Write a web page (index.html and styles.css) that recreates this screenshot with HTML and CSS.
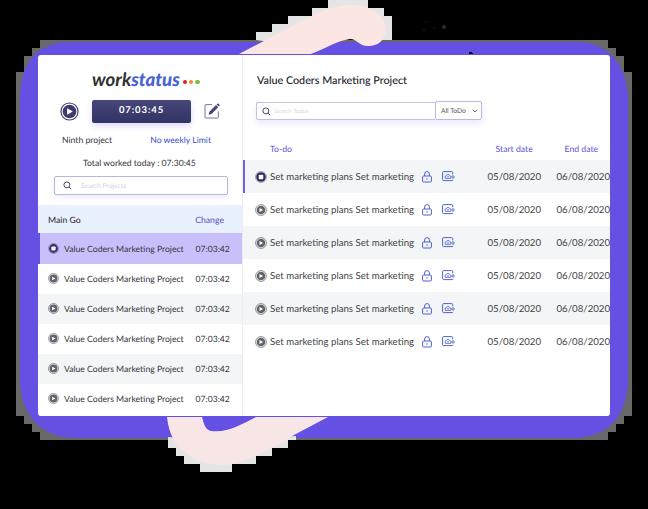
FILE: index.html
```
<!DOCTYPE html>
<html lang="en">
<head>
<meta charset="utf-8">
<title>Workstatus</title>
<link rel="stylesheet" href="styles.css">
</head>
<body>
<svg class="backdrop" width="648" height="509" viewBox="0 0 648 509">
  <path fill="#686868" d="M40 40H608V48H616V56H624V72H632V416H624V424H616V432H608V440H40V432H32V424H24V416H16V72H24V56H32V48H40Z"/>
  <path fill="#6550e4" d="M70 42H580C608 43 628 66 628 100V378C628 414 610 438 572 438H76C40 438 20 414 20 378V100C20 64 36 42 70 42Z"/>
  <path fill="#e6e5e5" d="M256 40V32H272V24H288V16H312V8H328V0H368V8H384V16H392V40H380L350 30L270 42Z"/>
  <path fill="#fce6e3" d="M239 54L302 21C318 13 332 5 351 5C373 5 386 17 386 31C384 41 378 46 368 46C359 46 357 39 350 39C337 41 326 48 311 54Z"/>
  <path fill="#e6e5e5" d="M168 437V448H176V456H184V464H200V472H232V464H256V456H272V448H288V440H296V436L230 440Z"/>
  <path fill="#f8e6e6" d="M167 417H202C204 425 206 430 211 431C228 433 242 424 256 417H328L294 435C270 450 249 460 232 464C215 467 200 463 189 455C176 446 169 436 167 417Z"/>
  <g fill="#302a35"><circle cx="426" cy="22" r=".6"/><circle cx="424" cy="30" r=".7"/><circle cx="434" cy="28" r=".6"/><circle cx="444" cy="27" r="2"/></g>
  <path fill="#080810" d="M469 52h3v1h1v1h-4z"/>
</svg>
<svg class="defs" width="0" height="0">
  <symbol id="play" viewBox="0 0 20 20"><circle cx="10" cy="10" r="9" fill="none" stroke="currentColor" stroke-width="1.2"/><circle cx="10" cy="10" r="7.2" fill="currentColor"/><path fill="#fff" d="M7.5 6.6v6.8l6-3.4z"/></symbol>
  <symbol id="stop" viewBox="0 0 20 20"><circle cx="10" cy="10" r="9.2" fill="none" stroke="currentColor" stroke-opacity=".5" stroke-width="1.3"/><circle cx="10" cy="10" r="8" fill="currentColor"/><rect x="6.2" y="6.2" width="7.6" height="7.6" rx="1.5" fill="#fff"/></symbol>
  <symbol id="search" viewBox="0 0 10 10"><g fill="none" stroke="currentColor" stroke-width="1"><circle cx="4.3" cy="4.3" r="3.3"/><path d="M6.8 6.8l2.3 2.3"/></g></symbol>
  <symbol id="lock" viewBox="0 0 10 12"><g fill="none" stroke="currentColor"><rect x=".6" y="5" width="8.8" height="6" rx="1"/><path d="M2.6 5V3a2.4 2.4 0 0 1 4.8 0v2M5 7.3v1.5"/></g></symbol>
  <symbol id="shot" viewBox="0 0 13 11"><g fill="none" stroke="currentColor"><path d="M10.7 3.4V1.6a1 1 0 0 0-1-1H1.6a1 1 0 0 0-1 1v7a1 1 0 0 0 1 1h8.6q.8 0 .9-.8"/><path stroke-width=".8" d="M3.2 7.4V5l1-.2.8-1.2h2l.8 1.2 1 .3v2.3z"/><circle cx="6" cy="5.8" r=".7" stroke-width=".5"/><circle cx="11" cy="6" r="1.2" stroke-width=".9"/></g></symbol>
</svg>
<main class="window">
  <aside class="side">
    <div class="logo"><span>work</span><b>status</b><i class="dot red"></i><i class="dot orange"></i><i class="dot green"></i></div>
    <div class="timer">
      <svg class="big-play" width="19" height="19"><use href="#play"/></svg>
      <div class="clock">07:03:45</div>
      <svg class="edit" width="16" height="16" viewBox="0 0 16 16"><path fill="none" stroke="#777697" d="M8 1.6H2a1 1 0 0 0-1 1V14a1 1 0 0 0 1 1h11.4a1 1 0 0 0 1-1V8.5"/><path fill="#494779" d="M4.6 11.8l.7-3L12 2.1l2.2 2.2L7.5 11zM12.6 1.5l.8-.8q.5-.4 1 0l1.1 1.1q.5.5 0 1l-.8.8z"/></svg>
    </div>
    <div class="meta"><span>Ninth project</span><a>No weekly Limit</a></div>
    <div class="total">Total worked today : 07:30:45</div>
    <div class="find"><svg width="9" height="9"><use href="#search"/></svg><span>Search Projects</span></div>
    <div class="group"><span>Main Go</span><a>Change</a></div>
    <ul class="projects">
      <li class="active"><svg><use href="#stop"/></svg><span>Value Coders Marketing Project</span><time>07:03:42</time></li>
      <li><svg><use href="#play"/></svg><span>Value Coders Marketing Project</span><time>07:03:42</time></li>
      <li><svg><use href="#play"/></svg><span>Value Coders Marketing Project</span><time>07:03:42</time></li>
      <li><svg><use href="#play"/></svg><span>Value Coders Marketing Project</span><time>07:03:42</time></li>
      <li><svg><use href="#play"/></svg><span>Value Coders Marketing Project</span><time>07:03:42</time></li>
      <li><svg><use href="#play"/></svg><span>Value Coders Marketing Project</span><time>07:03:42</time></li>
    </ul>
  </aside>
  <section class="content">
    <h1>Value Coders Marketing Project</h1>
    <div class="filters">
      <div class="query"><svg width="9" height="9"><use href="#search"/></svg><span>Search Todos</span></div>
      <div class="select"><span>All ToDo</span><svg width="6" height="4" viewBox="0 0 6 4"><path fill="none" stroke="#555" stroke-width=".9" d="M.7.7L3 3 5.3.7"/></svg></div>
    </div>
    <div class="row head"><span></span><span class="name">To-do</span><span></span><span></span><span class="date">Start date</span><span class="date end">End date</span></div>
    <div class="row active"><svg class="state"><use href="#stop"/></svg><span class="name">Set marketing plans Set marketing</span><svg class="lock"><use href="#lock"/></svg><svg class="shot"><use href="#shot"/></svg><span class="date">05/08/2020</span><span class="date">06/08/2020</span></div>
    <div class="row"><svg class="state"><use href="#play"/></svg><span class="name">Set marketing plans Set marketing</span><svg class="lock"><use href="#lock"/></svg><svg class="shot"><use href="#shot"/></svg><span class="date">05/08/2020</span><span class="date">06/08/2020</span></div>
    <div class="row"><svg class="state"><use href="#play"/></svg><span class="name">Set marketing plans Set marketing</span><svg class="lock"><use href="#lock"/></svg><svg class="shot"><use href="#shot"/></svg><span class="date">05/08/2020</span><span class="date">06/08/2020</span></div>
    <div class="row"><svg class="state"><use href="#play"/></svg><span class="name">Set marketing plans Set marketing</span><svg class="lock"><use href="#lock"/></svg><svg class="shot"><use href="#shot"/></svg><span class="date">05/08/2020</span><span class="date">06/08/2020</span></div>
    <div class="row"><svg class="state"><use href="#play"/></svg><span class="name">Set marketing plans Set marketing</span><svg class="lock"><use href="#lock"/></svg><svg class="shot"><use href="#shot"/></svg><span class="date">05/08/2020</span><span class="date">06/08/2020</span></div>
    <div class="row"><svg class="state"><use href="#play"/></svg><span class="name">Set marketing plans Set marketing</span><svg class="lock"><use href="#lock"/></svg><svg class="shot"><use href="#shot"/></svg><span class="date">05/08/2020</span><span class="date">06/08/2020</span></div>
  </section>
</main>
</body>
</html>
```
FILE: styles.css
```
* { box-sizing: border-box; }
body { margin: 0; width: 648px; height: 509px; overflow: hidden; background: #000; padding: 55px 38px 0; font-family: Lato, "Liberation Sans", sans-serif; color: #34343b; text-rendering: geometricPrecision; }
.backdrop { position: absolute; left: 0; top: 0; }
.defs { position: absolute; }
.window { position: relative; display: flex; width: 572px; height: 361px; background: #fff; border-radius: 3px; overflow: hidden; white-space: nowrap; }
svg { flex: none; display: block; }
.side { width: 205px; flex: none; border-right: 1px solid #ececf5; }
.logo { height: 45px; padding: 12px 0 0 54px; display: flex; font-size: 18.6px; line-height: 24px; font-style: italic; font-weight: 700; color: #303030; }
.logo b { width: 49.5px; color: #4861d3; margin-right: 2px; }
.dot { width: 4.4px; height: 4.4px; border-radius: 50%; margin: 13px 2px 0 0; }
.red { background: #d9232b; }
.orange { background: #ee8a35; }
.green { background: #7fb83e; }
.timer { height: 22px; display: flex; align-items: center; padding-left: 22px; color: #3d3b6c; }
.clock { width: 99px; height: 23px; margin: 0 13px 0 13px; border-radius: 2px; background: linear-gradient(#474779, #303363); box-shadow: 0 3px 7px #dcd9f5; color: #fff; text-align: center; font-size: 9.5px; font-weight: 700; line-height: 22px; letter-spacing: .9px; }
.meta { display: flex; justify-content: space-between; padding: 11px 31px 0 24px; font-size: 8.65px; line-height: 13px; }
.meta a { color: #384fce; }
.total { margin-top: 10px; padding-left: 45px; font-size: 8.65px; line-height: 13px; }
.find { display: flex; align-items: center; width: 174px; height: 19px; margin: 7px 0 0 16px; padding-left: 8px; border: 1px solid #b9b6dd; border-radius: 2px; box-shadow: 0 3px 6px #f0eef8; font-size: 6.7px; color: #d3d3db; }
.find svg, .query svg { color: #353550; }
.find span { margin-left: 9px; }
.group { height: 28px; margin-top: 10px; padding: 0 18px 0 10px; display: flex; align-items: center; justify-content: space-between; background: #eaf1fe; font-size: 8.7px; font-weight: 500; }
.group a { color: #594dca; font-weight: 400; }
.projects { list-style: none; margin: 0; padding: 0; font-size: 8.64px; }
.projects li { height: 30px; display: flex; align-items: center; padding: 0 0 1px 10px; }
.projects li.active { height: 31px; background: #c9c0fb; border-left: 2px solid #6651df; padding-left: 8px; }
.projects li:nth-child(odd):not(.active) { background: #f3f5f7; }
.projects svg { width: 11px; height: 11px; color: #64636e; }
.projects .active svg { color: #35306a; }
.projects span { width: 120px; margin: 0 11.5px 0 5px; }
.content { flex: 1; min-width: 0; }
h1 { margin: 18px 0 0 14px; font-size: 10.78px; line-height: 15px; font-weight: 500; color: #22222c; }
.filters { display: flex; align-items: flex-end; margin: 13px 0 0 13px; width: 226px; height: 19px; box-shadow: 0 4px 7px #eeeafd; }
.query { width: 179px; height: 18px; display: flex; align-items: center; padding-left: 5px; border: 1px solid #c6bdee; border-right: 0; border-radius: 2px 0 0 2px; font-size: 6px; color: #dcdce1; }
.query span { margin-left: 3px; }
.select { width: 47px; height: 19px; border: 1px solid #bdb4e8; border-radius: 2px; background: #fff; display: flex; align-items: center; gap: 6px; padding-left: 5px; font-size: 6.7px; color: #55555c; }
.row { display: grid; grid-template-columns: 15px 152px 20px 45.5px 69px 54px; align-items: center; height: 33px; padding: 1px 0 0 12px; font-size: 9.67px; color: #444449; }
.row:nth-child(even) { background: #f3f5f7; }
.row.head { height: 24px; margin-top: 16px; padding-top: 0; background: none; font-size: 8.7px; color: #6354d3; }
.head .date { padding-left: 8px; }
.row.active { border-left: 2px solid #7660df; padding-left: 10px; }
.state { width: 12px; height: 12px; color: #64646b; }
.active .state { color: #292c59; }
.lock { width: 10px; height: 12px; color: #5163ce; margin-top: -1px; }
.shot { width: 13px; height: 11px; color: #5163ce; margin-top: -1px; }
```
